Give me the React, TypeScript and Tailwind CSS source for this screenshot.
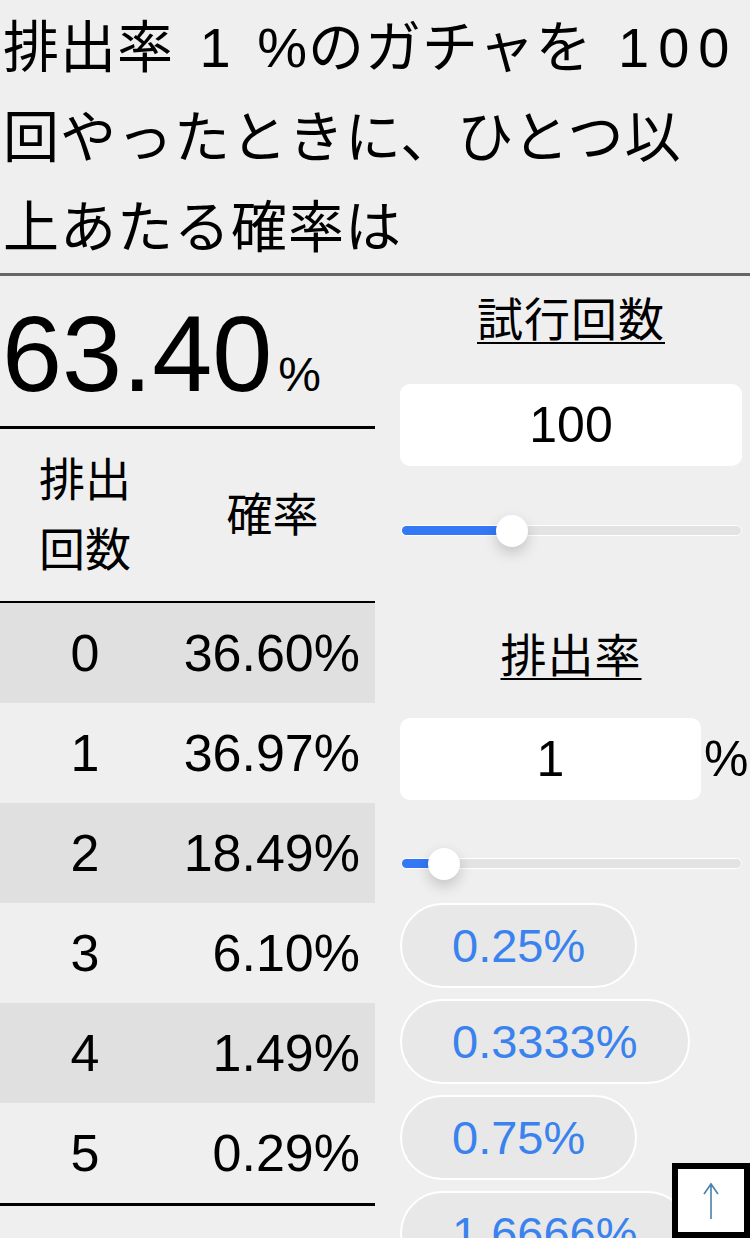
const rows = [
  ["0", "36.60%"],
  ["1", "36.97%"],
  ["2", "18.49%"],
  ["3", "6.10%"],
  ["4", "1.49%"],
  ["5", "0.29%"],
];

const presets = ["0.25%", "0.3333%", "0.75%", "1.6666%", "3%"];

function Slider(props: { pct: number }) {
  return (
    <div className="relative ml-[1px] h-[11px] rounded-full border border-white bg-[#e3e3e3]">
      <div className="h-full rounded-full bg-[#3478f6]" style={{ width: `${props.pct}%` }} />
      <div
        className="absolute top-1/2 size-[32px] -translate-x-1/2 -translate-y-1/2 rounded-full bg-white shadow-[0_6px_14px_rgba(0,0,0,0.18)]"
        style={{ left: `${props.pct}%` }}
      />
    </div>
  );
}

export default function App() {
  return (
    <div className="min-h-screen bg-[#efefef] font-['Liberation_Sans','Noto_Sans_CJK_JP',sans-serif] text-black">
      <h1 className="border-b-[3px] border-[#666] pl-[3px] pt-[3px] text-[56px] font-normal leading-[90px] tracking-[1px] [word-spacing:9px]">
        排出率 1 %のガチャを <span className="tracking-[9px]">100</span>
        <br />
        回やったときに、ひとつ以
        <br />
        上あたる確率は
      </h1>

      <div className="flex">
        <div className="w-[375px] shrink-0">
          <div className="border-b-[3px] border-black pb-[8px] pl-[2px] pt-[14px] text-[108px] leading-[128px]">
            63.40
            <span className="ml-[6px] text-[48px] leading-none">%</span>
          </div>

          <div className="flex h-[174px] items-center border-b-2 border-black text-[46px] leading-[70px]">
            <div className="w-[170px] px-[38px] text-center">排出回数</div>
            <div className="flex-1 text-center">確率</div>
          </div>

          <div className="border-b-[3px] border-black">
            {rows.map(([n, p], i) => (
              <div
                key={n}
                className={`flex h-[100px] items-center text-[52px] ${i % 2 === 0 ? "bg-[#e0e0e0]" : ""}`}
              >
                <div className="w-[170px] text-center">{n}</div>
                <div className="flex-1 pr-[15px] text-right">{p}</div>
              </div>
            ))}
          </div>
        </div>

        <div className="flex min-w-0 flex-1 flex-col pl-[25px] pr-[8px] pt-[14px]">
          <h2 className="text-center text-[46px] font-normal leading-[60px] tracking-[1px] underline underline-offset-[6px] decoration-2">
            試行回数
          </h2>
          <input
            readOnly
            value="100"
            size={3}
            className="mt-[34px] h-[82px] w-full rounded-[10px] bg-white text-center text-[50px] outline-none"
          />
          <div className="mt-[59px]">
            <Slider pct={32.5} />
          </div>

          <h2 className="mt-[90px] text-center text-[46px] font-normal leading-[60px] tracking-[1px] underline underline-offset-[6px] decoration-2">
            排出率
          </h2>
          <div className="mt-[32px] flex items-center">
            <input
              readOnly
              value="1"
              size={3}
              className="h-[82px] w-[301px] shrink-0 rounded-[10px] bg-white text-center text-[50px] outline-none"
            />
            <span className="ml-[3px] text-[50px] leading-none">%</span>
          </div>
          <div className="mt-[58px]">
            <Slider pct={12.3} />
          </div>

          <div className="mt-[34px] flex flex-col items-start gap-[11px]">
            {presets.map((p) => (
              <button
                key={p}
                className="h-[85px] rounded-full border-2 border-white bg-[#e8e8e8] px-[50px] text-[47px] leading-none text-[#3a82ee]"
              >
                {p}
              </button>
            ))}
          </div>
        </div>
      </div>

      <button className="fixed bottom-0 right-0 flex h-[75px] w-[78px] items-center justify-center border-[6px] border-black bg-white">
        <svg width="20" height="40" viewBox="0 0 20 40">
          <path d="M10 38V3M3 13l7-10 7 10" stroke="#4a80aa" strokeWidth="1.6" fill="none" />
        </svg>
      </button>
    </div>
  );
}
